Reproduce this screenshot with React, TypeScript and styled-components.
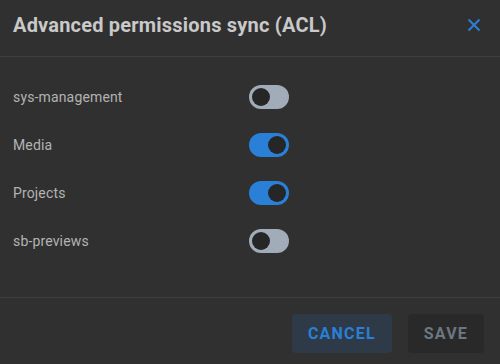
import React, { useState } from 'react';
import styled, { createGlobalStyle } from 'styled-components';

const GlobalStyle = createGlobalStyle`
html, body {
    margin: 0;
    padding: 0;
    background: #303030;
    font-family: Roboto, "Liberation Sans", sans-serif;
}
`

const Dialog = styled.div`
width: 500px;
height: 364px;
background: #303030;
display: flex;
flex-direction: column;
overflow: hidden;
`

const Header = styled.div`
height: 50px;
display: flex;
align-items: center;
justify-content: space-between;
padding: 0 19px 6px 13px;
border-bottom: 1px solid #3e3e3e;
`

const Title = styled.h2`
margin: 0;
font-size: 20px;
font-weight: 700;
letter-spacing: 0.2px;
color: #c9c9c9;
`

const CloseButton = styled.button`
background: none;
border: none;
padding: 0;
width: 14px;
height: 14px;
display: flex;
align-items: center;
justify-content: center;
cursor: pointer;
`

const Body = styled.div`
padding: 16px 13px 32px 13px;
display: flex;
flex-direction: column;
border-bottom: 1px solid #3e3e3e;
`

const Row = styled.div`
height: 48px;
display: grid;
grid-template-columns: 236px auto;
align-items: center;
`

const Label = styled.span`
font-size: 14px;
letter-spacing: 0.15px;
color: #b3b3b3;
`

const Track = styled.button<{ $on: boolean }>`
width: 40px;
height: 24px;
border-radius: 12px;
border: none;
padding: 3px;
display: flex;
justify-content: ${p => p.$on ? 'flex-end' : 'flex-start'};
background: ${p => p.$on ? '#2a7fd6' : '#a1acb8'};
cursor: pointer;
`

const Knob = styled.span`
width: 18px;
height: 18px;
border-radius: 50%;
background: #262626;
`

const Footer = styled.div`
display: flex;
justify-content: flex-end;
gap: 16px;
padding: 16px 16px 0 0;
`

const Button = styled.button<{ $primary?: boolean }>`
height: 39px;
padding: 0 16px;
border: none;
border-radius: 4px;
font-family: Roboto, "Liberation Sans", sans-serif;
font-size: 16px;
font-weight: 700;
letter-spacing: 1.2px;
text-transform: uppercase;
background: ${p => p.$primary ? '#2e3a47' : '#292929'};
color: ${p => p.$primary ? '#2a7fd6' : '#6c7782'};
cursor: pointer;
`

const groups = [
    { name: 'sys-management', on: false },
    { name: 'Media', on: true },
    { name: 'Projects', on: true },
    { name: 'sb-previews', on: false },
];

export default function App() {
    const [state, setState] = useState(groups);

    const toggle = (i: number) =>
        setState(s => s.map((g, j) => j === i ? { ...g, on: !g.on } : g));

    return <>
        <GlobalStyle />
        <Dialog>
            <Header>
                <Title>Advanced permissions sync (ACL)</Title>
                <CloseButton aria-label="close">
                    <svg width="14" height="14" viewBox="0 0 14 14" stroke="#2a7fd6" strokeWidth="2" fill="none">
                        <path d="M1.5 1.5L12.5 12.5M12.5 1.5L1.5 12.5" />
                    </svg>
                </CloseButton>
            </Header>
            <Body>
                {state.map((g, i) =>
                    <Row key={g.name}>
                        <Label>{g.name}</Label>
                        <Track $on={g.on} onClick={() => toggle(i)}><Knob /></Track>
                    </Row>
                )}
            </Body>
            <Footer>
                <Button $primary>Cancel</Button>
                <Button>Save</Button>
            </Footer>
        </Dialog>
    </>
}
